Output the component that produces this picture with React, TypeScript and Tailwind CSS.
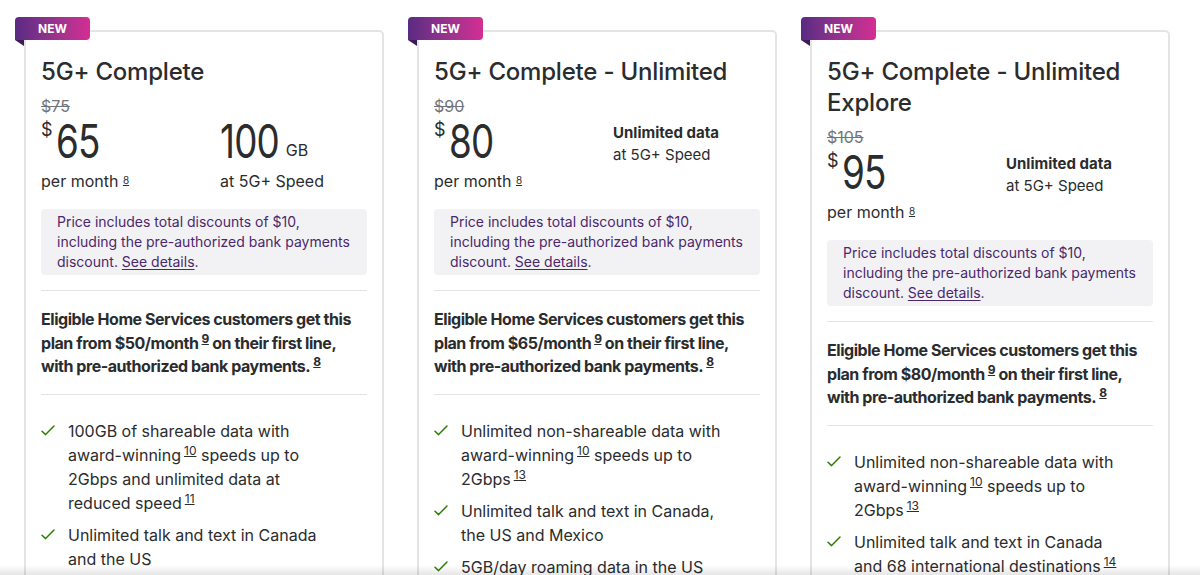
import React from 'react'

interface Plan {
  title: string
  was: string
  price: string
  data: 'gb' | 'unlimited'
  from: string
  features: React.ReactNode[]
}

// footnote marker, raised a little and underlined like the site does it
const Sup = ({ n, small }: { n: string; small?: boolean }) => (
  <span
    className={
      small
        ? 'relative -top-[3px] text-[10px] leading-none underline underline-offset-1'
        : 'relative -top-[6px] ml-[3px] text-[12px] leading-none underline underline-offset-1'
    }
  >
    {n}
  </span>
)

const Check = () => (
  <svg width="14" height="11" viewBox="0 0 14 11" fill="none" className="mt-[6px] shrink-0">
    <path d="M1 6.2 L4.6 9.6 L13 1" stroke="#2b8000" strokeWidth="1.5" strokeLinecap="round" strokeLinejoin="round" />
  </svg>
)

const plans: Plan[] = [
  {
    title: '5G+ Complete',
    was: '$75',
    price: '65',
    data: 'gb',
    from: '$50/month',
    features: [
      <>
        100GB of shareable data with award-winning<Sup n="10" /> speeds up to 2Gbps and unlimited data at reduced speed<Sup n="11" />
      </>,
      <>Unlimited talk and text in Canada and the US</>,
    ],
  },
  {
    title: '5G+ Complete - Unlimited',
    was: '$90',
    price: '80',
    data: 'unlimited',
    from: '$65/month',
    features: [
      <>
        Unlimited non-shareable data with award-winning<Sup n="10" /> speeds up to 2Gbps<Sup n="13" />
      </>,
      <>Unlimited talk and text in Canada, the US and Mexico</>,
      <>5GB/day roaming data in the US</>,
    ],
  },
  {
    title: '5G+ Complete - Unlimited Explore',
    was: '$105',
    price: '95',
    data: 'unlimited',
    from: '$80/month',
    features: [
      <>
        Unlimited non-shareable data with award-winning<Sup n="10" /> speeds up to 2Gbps<Sup n="13" />
      </>,
      <>
        Unlimited talk and text in Canada and 68 international destinations<Sup n="14" />
      </>,
    ],
  },
]

// the site's display face is narrow, so squeeze Inter a bit
const bigNum = 'inline-block origin-left scale-x-[0.8] text-[46px] leading-[46px] tracking-[-1px] text-[#2a2c2e]'

const PlanCard = ({ plan }: { plan: Plan }) => (
  <div className="relative">
    <div className="absolute -left-[9px] -top-[13px] z-10">
      <div className="flex h-[23px] w-[75px] items-center rounded-r-[4px] rounded-tl-[4px] bg-gradient-to-r from-[#5a2a82] to-[#d42d93] pl-[23px] text-[12px] font-bold text-white">
        NEW
      </div>
      <div className="h-0 w-0 border-l-[9px] border-t-[6px] border-l-transparent border-t-[#3b1a56]" />
    </div>
    <div className="h-[560px] rounded-[5px] border-2 border-[#e3e4e6] bg-white px-[15px] pt-[24px]">
      <h2 className="w-[300px] text-[24px] font-medium leading-[31px] tracking-[-0.2px] text-[#2a2c2e]">{plan.title}</h2>
      <div className="mt-[7px] text-[16px] leading-6 text-[#71757b] line-through">{plan.was}</div>
      <div className="flex">
        <div className="w-[179px] shrink-0">
          <div className="flex items-start text-[#2a2c2e]">
            <span className="mt-[3px] text-[18px] leading-none">$</span>
            <span className={bigNum + ' ml-[3px]'}>{plan.price}</span>
          </div>
          <div className="mt-[5px] text-[16px] leading-6 text-[#2a2c2e]">
            per month <Sup n="8" small />
          </div>
        </div>
        {plan.data === 'gb' ? (
          <div>
            <div className="flex items-end">
              <span className={bigNum + ' -mr-[13px]'}>100</span>
              <span className="mb-[6px] ml-[5px] text-[16px] leading-none text-[#2a2c2e]">GB</span>
            </div>
            <div className="mt-[5px] text-[16px] leading-6 text-[#2a2c2e]">at 5G+ Speed</div>
          </div>
        ) : (
          <div className="pt-[4px] text-[#2a2c2e]">
            <div className="text-[15px] font-bold leading-[22px]">Unlimited data</div>
            <div className="text-[15px] leading-[22px]">at 5G+ Speed</div>
          </div>
        )}
      </div>
      <div className="mt-[16px] rounded-[4px] bg-[#f2f2f4] px-4 py-[3px] text-[14px] leading-5 text-[#4b286d]">
        Price includes total discounts of $10, including the pre-authorized bank payments discount.{' '}
        <span className="underline underline-offset-2">See details</span>.
      </div>
      <hr className="mt-[15px] border-t border-[#e3e4e6]" />
      <p className="mt-[17px] text-[16px] font-bold leading-[23.5px] tracking-[-0.45px] text-[#2a2c2e]">
        Eligible Home Services customers get this plan from {plan.from}
        <Sup n="9" /> on their first line, with pre-authorized bank payments.
        <Sup n="8" />
      </p>
      <hr className="mt-[15px] border-t border-[#e3e4e6]" />
      <ul className="mt-[24px] flex flex-col gap-2">
        {plan.features.map((f, i) => (
          <li key={i} className="flex gap-[13px] text-[16px] leading-6 text-[#2a2c2e]">
            <Check />
            <span className="w-[272px]">{f}</span>
          </li>
        ))}
      </ul>
    </div>
  </div>
)

export default function App() {
  return (
    <div className="relative h-[575px] overflow-hidden bg-white font-['Inter',sans-serif]">
      <div className="grid grid-cols-[360px_360px_360px] gap-[33px] pl-[24px] pt-[30px]">
        {plans.map((p, i) => (
          <PlanCard key={i} plan={p} />
        ))}
      </div>
      <div className="pointer-events-none absolute bottom-0 left-0 h-[10px] w-full bg-gradient-to-t from-black/10 to-transparent" />
    </div>
  )
}
